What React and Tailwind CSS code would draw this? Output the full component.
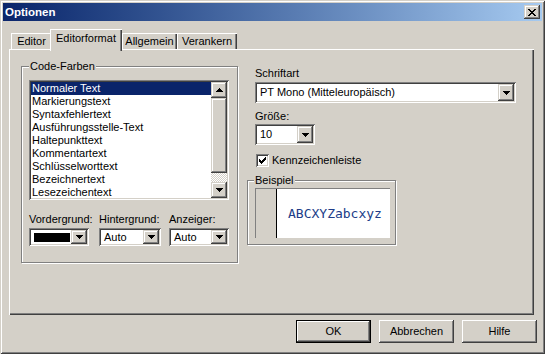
import React from 'react';

const raised = "shadow-[inset_-1px_-1px_#404040,inset_1px_1px_#fff,inset_-2px_-2px_#808080,inset_2px_2px_#d4d0c8]";
const smallRaised = "shadow-[inset_-1px_-1px_#404040,inset_1px_1px_#d4d0c8,inset_-2px_-2px_#808080,inset_2px_2px_#fff]";
const sunken = "shadow-[inset_1px_1px_#808080,inset_-1px_-1px_#fff,inset_2px_2px_#404040,inset_-2px_-2px_#d4d0c8]";
const etched = "border border-[#808080] shadow-[inset_1px_1px_#fff,1px_1px_#fff]";

const CLOSE = ["xx....xx", ".xx..xx.", "..xxxx..", "...xx...", "..xxxx..", ".xx..xx.", "xx....xx"];
const CHECK = ["......x", ".....xx", "x...xxx", "xx.xxx.", "xxxxx..", ".xxx...", "..x...."];

function Pixels({ rows, color = "#000" }) {
  return (
    <svg width={rows[0].length} height={rows.length} shapeRendering="crispEdges">
      {rows.map((r, y) =>
        r.split("").map((c, x) => (c === "x" ? <rect key={`${x}-${y}`} x={x} y={y} width="1" height="1" fill={color} /> : null))
      )}
    </svg>
  );
}

function Arrow({ up }) {
  return (
    <svg width="7" height="4" shapeRendering="crispEdges" className={up ? "rotate-180" : ""}>
      <path d="M0 0h7v1h-1v1h-1v1h-1v1h-1v-1h-1v-1h-1v-1h-1z" fill="#000" />
    </svg>
  );
}

function Combo({ size, children }) {
  return (
    <div className={`${size} bg-white flex p-[2px] ${sunken}`}>
      <div className="flex-1 flex items-center pl-[3px] min-w-0 whitespace-nowrap">{children}</div>
      <div className={`w-[16px] h-full flex items-center justify-center bg-[#d4d0c8] ${smallRaised}`}>
        <Arrow />
      </div>
    </div>
  );
}

function Button({ label, isDefault }) {
  return (
    <div className={`w-[75px] h-[23px] ${isDefault ? "border border-black" : ""}`}>
      <div className={`w-full h-full flex items-center justify-center ${raised}`}>{label}</div>
    </div>
  );
}

const items = [
  "Normaler Text",
  "Markierungstext",
  "Syntaxfehlertext",
  "Ausführungsstelle-Text",
  "Haltepunkttext",
  "Kommentartext",
  "Schlüsselworttext",
  "Bezeichnertext",
  "Lesezeichentext",
];

export default function App() {
  return (
    <div className={`w-[545px] h-[354px] bg-[#d4d0c8] text-[11px] leading-[13px] text-black font-['Liberation_Sans',Arial,sans-serif] overflow-hidden shadow-[inset_1px_1px_#d4d0c8,inset_-1px_-1px_#404040,inset_2px_2px_#fff,inset_-2px_-2px_#808080]`}>
      {/* title bar */}
      <div className="mx-[3px] mt-[3px] h-[18px] flex items-center justify-between pl-[2px] pr-[2px] bg-gradient-to-r from-[#0a246a] to-[#a6caf0]">
        <span className="text-white font-bold text-[11.5px]">Optionen</span>
        <div className={`w-[16px] h-[14px] bg-[#d4d0c8] flex items-center justify-center ${smallRaised}`}>
          <Pixels rows={CLOSE} />
        </div>
      </div>

      {/* tabs */}
      <div className="mt-[8px] ml-[9px] h-[20px] flex items-end">
        <div className="ml-[2px] w-[41px] h-[16px] pt-[2px] text-center shadow-[inset_1px_1px_#fff,inset_-1px_0_#404040,inset_-2px_0_#808080]">Editor</div>
        <div className="relative z-10 -ml-[2px] w-[72px] h-[22px] -mb-[2px] pt-[3px] text-center bg-[#d4d0c8] shadow-[inset_1px_1px_#fff,inset_-1px_0_#404040,inset_-2px_0_#808080]">Editorformat</div>
        <div className="w-[55px] h-[16px] pt-[2px] text-center shadow-[inset_1px_1px_#fff,inset_-1px_0_#404040,inset_-2px_0_#808080]">Allgemein</div>
        <div className="w-[60px] h-[16px] pt-[2px] text-center shadow-[inset_1px_1px_#fff,inset_-1px_0_#404040,inset_-2px_0_#808080]">Verankern</div>
      </div>

      {/* panel */}
      <div className="mx-[9px] w-[525px] h-[266px] flex items-start shadow-[inset_1px_1px_#fff,inset_-1px_-1px_#404040,inset_-2px_-2px_#808080]">
        {/* Code-Farben group */}
        <div className={`relative ml-[12px] mt-[17px] w-[217px] h-[197px] pt-[13px] pl-[7px] ${etched}`}>
          <span className="absolute -top-[7px] left-[7px] px-[1px] bg-[#d4d0c8]">Code-Farben</span>
          <div className={`w-[200px] h-[120px] bg-white p-[2px] flex ${sunken}`}>
            <div className="flex-1 overflow-hidden">
              {items.map((t, i) => (
                <div key={t} className={`h-[13px] pl-[1px] whitespace-nowrap ${i === 0 ? "bg-[#0a246a] text-white" : ""}`}>
                  {t}
                </div>
              ))}
            </div>
            <div className="w-[16px] flex flex-col">
              <div className={`h-[16px] flex items-center justify-center bg-[#d4d0c8] ${smallRaised}`}>
                <Arrow up />
              </div>
              <div className={`h-[75px] bg-[#d4d0c8] ${smallRaised}`} />
              <div className="flex-1 bg-[repeating-conic-gradient(#d4d0c8_0%_25%,#fff_0%_50%)] bg-[length:2px_2px]" />
              <div className={`h-[16px] flex items-center justify-center bg-[#d4d0c8] ${smallRaised}`}>
                <Arrow />
              </div>
            </div>
          </div>
          <div className="mt-[13px] flex">
            <div className="w-[70px]">
              <div>Vordergrund:</div>
              <div className="mt-[2px]">
                <Combo size="w-[60px] h-[18px]">
                  <div className="w-[36px] h-[9px] bg-black" />
                </Combo>
              </div>
            </div>
            <div className="w-[70px]">
              <div>Hintergrund:</div>
              <div className="mt-[2px]">
                <Combo size="w-[62px] h-[18px]">Auto</Combo>
              </div>
            </div>
            <div>
              <div>Anzeiger:</div>
              <div className="mt-[2px]">
                <Combo size="w-[60px] h-[18px]">Auto</Combo>
              </div>
            </div>
          </div>
        </div>

        {/* right column */}
        <div className="ml-[9px] mt-[18px] flex flex-col">
          <div className="ml-[8px]">Schriftart</div>
          <div className="ml-[8px] mt-[2px]">
            <Combo size="w-[261px] h-[21px]">PT Mono (Mitteleuropäisch)</Combo>
          </div>
          <div className="ml-[8px] mt-[7px]">Größe:</div>
          <div className="ml-[8px] mt-[1px]">
            <Combo size="w-[60px] h-[21px]">10</Combo>
          </div>
          <div className="ml-[9px] mt-[9px] flex items-center gap-[3px]">
            <div className={`w-[13px] h-[13px] bg-white flex items-center justify-center ${sunken}`}>
              <Pixels rows={CHECK} />
            </div>
            <span>Kennzeichenleiste</span>
          </div>
          <div className={`relative mt-[13px] w-[149px] h-[65px] pt-[7px] pl-[7px] ${etched}`}>
            <span className="absolute -top-[7px] left-[6px] px-[1px] bg-[#d4d0c8]">Beispiel</span>
            <div className="w-[135px] h-[50px] flex bg-white border-t border-l border-[#808080]">
              <div className="w-[21px] h-full bg-[#d4d0c8] border-r border-black" />
              <div className="flex-1 flex items-center pl-[11px] font-['DejaVu_Sans_Mono',monospace] text-[13px] text-[#203c88]">
                ABCXYZabcxyz
              </div>
            </div>
          </div>
        </div>
      </div>

      {/* buttons */}
      <div className="mt-[5px] pr-[8px] flex justify-end gap-[8px]">
        <Button label="OK" isDefault />
        <Button label="Abbrechen" />
        <Button label="Hilfe" />
      </div>
    </div>
  );
}
